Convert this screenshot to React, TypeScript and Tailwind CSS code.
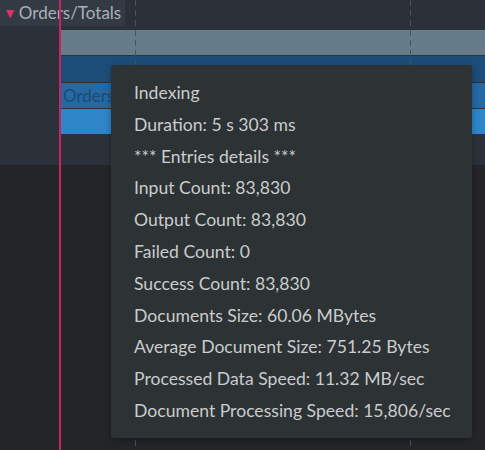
const lines = [
  "Indexing",
  "Duration: 5 s 303 ms",
  "*** Entries details ***",
  "Input Count: 83,830",
  "Output Count: 83,830",
  "Failed Count: 0",
  "Success Count: 83,830",
  "Documents Size: 60.06 MBytes",
  "Average Document Size: 751.25 Bytes",
  "Processed Data Speed: 11.32 MB/sec",
  "Document Processing Speed: 15,806/sec",
];

function Dashed({ left }: { left: string }) {
  return (
    <div
      className={`absolute top-0 h-[450px] w-px ${left} bg-[repeating-linear-gradient(to_bottom,#4a5260_0px,#4a5260_6px,transparent_6px,transparent_10px)]`}
    />
  );
}

export default function App() {
  return (
    <div className="relative h-[450px] w-[485px] overflow-hidden bg-[#232529] font-['Lato',sans-serif]">
      <div className="flex h-[165px] flex-col bg-[#2c3139]">
        <div className="flex h-[30px] items-start">
          <div className="flex h-[26px] w-[125px] items-center gap-[2px] bg-[#343a43] pl-[3px] text-[17px] text-[#a9b0b8]">
            <span className="text-[14px] leading-none text-[#e0306e]">▼</span>
            <span>Orders/Totals</span>
          </div>
        </div>
        <div className="ml-[60px] flex flex-col gap-[1px]">
          <div className="h-[25px] bg-[#667d89]" />
          <div className="h-[26px] bg-[#1c4d78]" />
          <div className="flex h-[25px] items-center bg-[#2469a3] pl-[3px]">
            <span className="w-[48px] overflow-hidden whitespace-nowrap text-[17px] text-[#1d4a70]">Orders</span>
          </div>
          <div className="h-[25px] bg-[#2e86c9]" />
        </div>
      </div>
      <Dashed left="left-[135px]" />
      <Dashed left="left-[410px]" />
      <div className="absolute left-[59px] top-0 h-[450px] w-[2px] bg-[#c8245f]" />
      <div className="absolute left-[111px] top-[65px] w-[361px] rounded-[3px] bg-[#2d3234] pb-[11px] pl-[23px] pt-[12px] text-[17.6px] text-[#c9cccd] shadow-[0_2px_6px_rgba(0,0,0,0.3)]">
        {lines.map((l) => (
          <div key={l} className="h-[31.8px] leading-[31.8px] whitespace-nowrap">
            {l}
          </div>
        ))}
      </div>
    </div>
  );
}
